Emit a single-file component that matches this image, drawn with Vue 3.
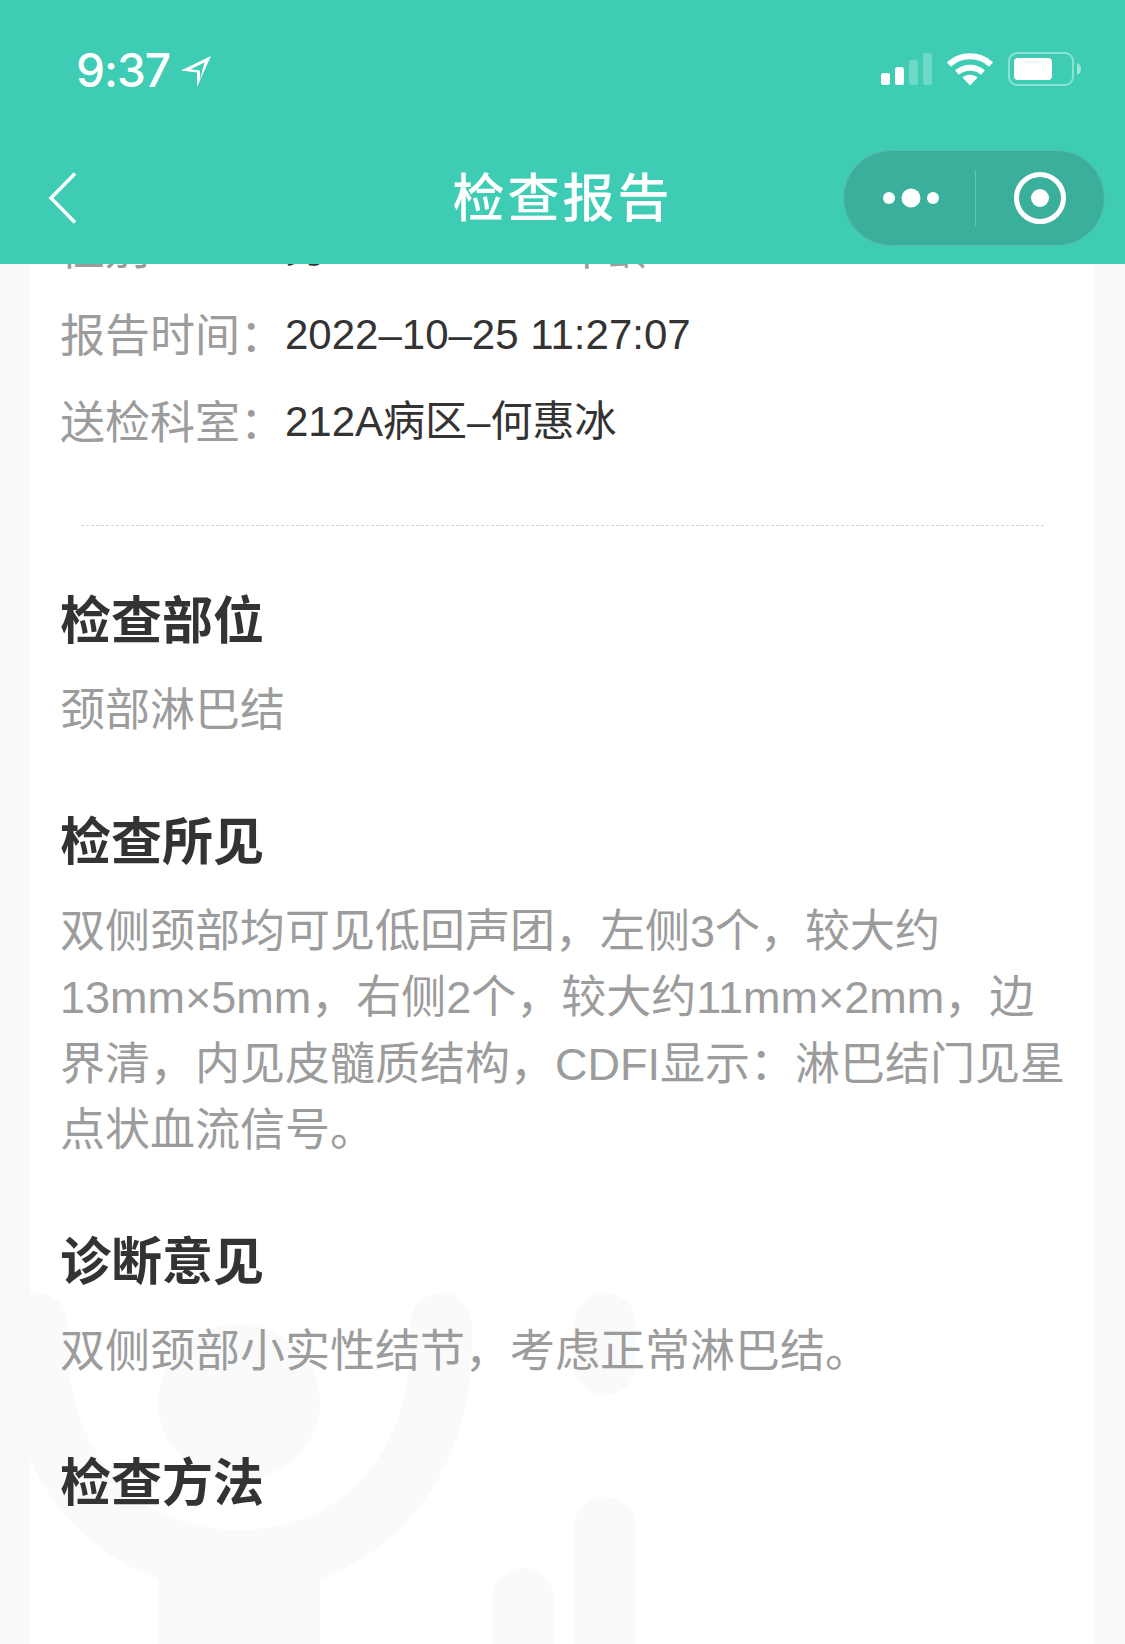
<script setup>
// 报告基本信息
const infoRows = [
  { label: '报告时间\uFF1A', value: '2022–10–25 11:27:07' },
  { label: '送检科室\uFF1A', value: '212A病区–何惠冰' }
];

// 报告正文,每段按行拆开
const sections = [
  { title: '检查部位', lines: ['颈部淋巴结'] },
  {
    title: '检查所见',
    lines: [
      '双侧颈部均可见低回声团\uFF0C左侧3个\uFF0C较大约',
      '13mm×5mm\uFF0C右侧2个\uFF0C较大约11mm×2mm\uFF0C边',
      '界清\uFF0C内见皮髓质结构\uFF0CCDFI显示\uFF1A淋巴结门见星',
      '点状血流信号。'
    ]
  },
  { title: '诊断意见', lines: ['双侧颈部小实性结节\uFF0C考虑正常淋巴结。'] },
  { title: '检查方法', lines: [] }
];
</script>

<template>
  <div class="page">
    <header class="top">
      <div class="status-bar">
        <div class="time-box">
          <span class="time">9:37</span>
          <svg class="arrow" width="32" height="32" viewBox="0 0 32 32">
            <path d="M31 1 1 15.500l16 2V32z M24.500 7.500 10.500 14.200l9.500 1.300v9z" fill="#fff" fill-rule="evenodd" />
          </svg>
        </div>
        <div class="status-icons">
          <svg width="52" height="34" viewBox="0 0 52 34">
            <rect x="0" y="21" width="9" height="12" rx="2.500" fill="#fff" />
            <rect x="14" y="15" width="9" height="18" rx="2.500" fill="#fff" />
            <rect x="28" y="8" width="9" height="25" rx="2.500" fill="#fff" fill-opacity="0.25" />
            <rect x="42" y="1" width="9" height="32" rx="2.500" fill="#fff" fill-opacity="0.25" />
          </svg>
          <svg width="46" height="34" viewBox="0 0 46 34">
            <path d="M2 12.500C13.500 1.500 32.500 1.500 44 12.500" fill="none" stroke="#fff" stroke-width="6" />
            <path d="M10 20.500C17.500 14 28.500 14 36 20.500" fill="none" stroke="#fff" stroke-width="6" />
            <path d="M15.500 25.500C20 21.800 26 21.800 30.500 25.500L23 33.500z" fill="#fff" />
          </svg>
          <svg class="battery" width="74" height="34" viewBox="0 0 74 34">
            <rect x="1" y="1" width="64" height="32" rx="8" fill="none" stroke="#fff" stroke-opacity="0.4" stroke-width="2" />
            <rect x="6" y="6" width="38" height="22" rx="4" fill="#fff" />
            <path d="M69 11c3 1 4 3.500 4 6s-1 5-4 6z" fill="#fff" fill-opacity="0.5" />
          </svg>
        </div>
      </div>
      <div class="nav-bar">
        <svg class="back" width="30" height="52" viewBox="0 0 30 52">
          <path d="M27 1.500 3 26l24 24.500" fill="none" stroke="#fff" stroke-width="3.500" />
        </svg>
        <h1 class="nav-title">检查报告</h1>
        <div class="capsule">
          <div class="capsule-btn dots">
            <svg width="56" height="20" viewBox="0 0 56 20">
              <circle cx="6" cy="10" r="6" fill="#fff" />
              <circle cx="28" cy="10" r="9.500" fill="#fff" />
              <circle cx="50" cy="10" r="6" fill="#fff" />
            </svg>
          </div>
          <div class="capsule-line"></div>
          <div class="capsule-btn ring">
            <svg width="52" height="52" viewBox="0 0 52 52">
              <circle cx="26" cy="26" r="23.500" fill="none" stroke="#fff" stroke-width="5" />
              <circle cx="26" cy="26" r="9" fill="#fff" />
            </svg>
          </div>
        </div>
      </div>
    </header>

    <main class="card">
      <!-- 背景水印 -->
      <svg class="watermark" width="1065" height="360" viewBox="0 0 1065 360">
        <g fill="none" stroke="#fafafa">
          <path d="M7 32V50C7 180 90 269 209 269S411 180 411 50V32" stroke-width="62" stroke-linecap="round" />
          <path d="M209 280V360" stroke-width="162" />
          <path d="M575 32V72" stroke-width="62" stroke-linecap="round" />
          <path d="M575 236V360" stroke-width="62" stroke-linecap="round" />
          <path d="M493 307V360" stroke-width="62" stroke-linecap="round" />
        </g>
        <ellipse cx="209" cy="110" rx="81" ry="78" fill="#fafafa" />
      </svg>

      <div class="card-inner">
        <div class="info">
          <div class="info-row">
            <span class="info-label">性别</span>
            <span class="info-value sex">男</span>
            <span class="info-label">年龄</span>
          </div>
          <div v-for="row in infoRows" :key="row.label" class="info-row">
            <span class="info-label">{{ row.label }}</span>
            <span class="info-value">{{ row.value }}</span>
          </div>
        </div>

        <div class="divider"></div>

        <section v-for="sec in sections" :key="sec.title" class="section">
          <h2 class="section-title">{{ sec.title }}</h2>
          <p v-for="line in sec.lines" :key="line" class="section-line">{{ line }}</p>
        </section>
      </div>
    </main>
  </div>
</template>

<style>
html, body { margin: 0; background: #f9f9f9; }
</style>

<style scoped>
.page {
  height: 1644px;
  overflow: hidden;
  background: #f9f9f9;
  font-family: "Liberation Sans", "Noto Sans CJK SC", sans-serif;
}

/* 顶部导航 */
.top {
  position: relative;
  z-index: 2;
  height: 264px;
  background: #3ecdb4;
  color: #fff;
}
.status-bar {
  height: 140px;
  display: flex;
  justify-content: space-between;
  padding: 52px 43px 0 76px;
  box-sizing: border-box;
}
.time-box { display: flex; align-items: flex-start; gap: 10px; }
.time { font-family: Inter, sans-serif; font-size: 46px; line-height: 36px; font-weight: 550; letter-spacing: -1px; }
.arrow { margin-top: 3px; }
.status-icons { display: flex; align-items: flex-start; gap: 14px; }
.status-icons svg { display: block; }
.battery { margin-left: 1px; }
.nav-bar {
  height: 124px;
  position: relative;
  display: flex;
  align-items: center;
  justify-content: center;
}
.back { position: absolute; left: 48px; top: 32px; }
.nav-title {
  margin: 0;
  font-size: 52px;
  font-weight: 500;
  letter-spacing: 3px;
  line-height: 112px;
  padding-bottom: 6px;
}
.capsule {
  position: absolute;
  top: 10px;
  left: 843px;
  width: 262px;
  height: 96px;
  box-sizing: border-box;
  display: flex;
  align-items: center;
  background: #3aaf9c;
  border: 1px solid #5bbcab;
  border-radius: 48px;
}
.capsule-btn { flex: 1; display: flex; justify-content: center; align-items: center; }
.capsule-btn svg { display: block; }
.dots { padding-left: 2px; }
.dots svg { margin-left: 2px; }
.ring svg { margin-left: 1px; }
.capsule-line { width: 1px; height: 56px; background: #66c3b3; }

/* 报告卡片 */
.card {
  position: relative;
  margin: -60px 30px 0;
  background: #fff;
  height: 1600px;
  overflow: hidden;
}
.watermark { position: absolute; left: 0; top: 1088px; }
.card-inner { position: relative; padding: 0 30px; }
.info-row { height: 87px; line-height: 87px; font-size: 45px; display: flex; }
.info-label { width: 225px; color: #9c9c9c; padding-top: 2px; }
.info-value { color: #333; font-size: 42px; }
.sex { width: 277px; }
.divider {
  margin: 60px 21px 0 21px;
  border-top: 1px dashed #d4d4d4;
}
.section:first-of-type { padding-top: 63px; }
.section-title {
  margin: 0;
  font-size: 51px;
  line-height: 66px;
  font-weight: 700;
  color: #333;
  padding-bottom: 23px;
}
.section-line {
  margin: 0;
  font-size: 45px;
  line-height: 66.2px;
  color: #9c9c9c;
  white-space: nowrap;
}
.section + .section { padding-top: 66px; }
</style>
